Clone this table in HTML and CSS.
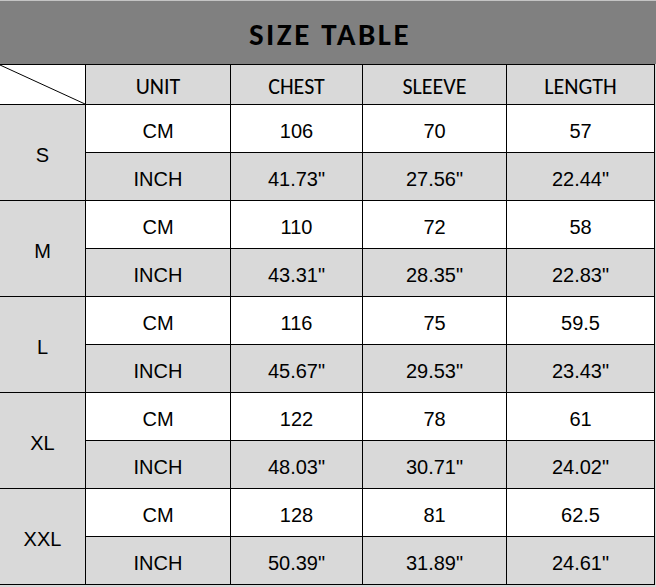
FILE: index.html
```html
<!DOCTYPE html>
<html>
<head>
<meta charset="utf-8">
<link rel="stylesheet" href="styles.css">
</head>
<body>
<div class="title">SIZE TABLE</div>
<div class="grid">
  <div class="cell corner"><svg width="85" height="39" viewBox="0 0 85 39"><line x1="0" y1="0" x2="85" y2="39" stroke="#000" stroke-width="1"/></svg></div>
  <div class="cell head">UNIT</div>
  <div class="cell head">CHEST</div>
  <div class="cell head">SLEEVE</div>
  <div class="cell head">LENGTH</div>

  <div class="cell size">S</div>
  <div class="cell cm">CM</div><div class="cell cm">106</div><div class="cell cm">70</div><div class="cell cm">57</div>
  <div class="cell in">INCH</div><div class="cell in">41.73"</div><div class="cell in">27.56"</div><div class="cell in">22.44"</div>

  <div class="cell size">M</div>
  <div class="cell cm">CM</div><div class="cell cm">110</div><div class="cell cm">72</div><div class="cell cm">58</div>
  <div class="cell in">INCH</div><div class="cell in">43.31"</div><div class="cell in">28.35"</div><div class="cell in">22.83"</div>

  <div class="cell size">L</div>
  <div class="cell cm">CM</div><div class="cell cm">116</div><div class="cell cm">75</div><div class="cell cm">59.5</div>
  <div class="cell in">INCH</div><div class="cell in">45.67"</div><div class="cell in">29.53"</div><div class="cell in">23.43"</div>

  <div class="cell size">XL</div>
  <div class="cell cm">CM</div><div class="cell cm">122</div><div class="cell cm">78</div><div class="cell cm">61</div>
  <div class="cell in">INCH</div><div class="cell in">48.03"</div><div class="cell in">30.71"</div><div class="cell in">24.02"</div>

  <div class="cell size">XXL</div>
  <div class="cell cm">CM</div><div class="cell cm">128</div><div class="cell cm">81</div><div class="cell cm">62.5</div>
  <div class="cell in">INCH</div><div class="cell in">50.39"</div><div class="cell in">31.89"</div><div class="cell in">24.61"</div>
</div>
</body>
</html>
```
FILE: styles.css
```css
html, body {
  margin: 0;
  padding: 0;
  background: #d9d9d9;
}
body {
  width: 656px;
  height: 587px;
  overflow: hidden;
}
.title {
  box-sizing: border-box;
  height: 64px;
  border-top: 1px solid #c4c4c4;
  background: #808080;
  color: #000;
  font-family: "Carlito", "Lato", sans-serif;
  font-weight: 700;
  font-size: 31px;
  letter-spacing: 2.5px;
  display: flex;
  align-items: center;
  justify-content: center;
  padding-left: 4px;
  padding-top: 3px;
}
.grid {
  display: grid;
  grid-template-columns: 85px 144px 131px 143px 147px;
  grid-template-rows: 39px repeat(10, 47px);
  gap: 1px;
  background: #000;
  border-top: 1px solid #000;
  border-right: 1px solid #000;
  border-bottom: 1px solid #000;
  width: 654px;
}
.cell {
  display: flex;
  align-items: center;
  justify-content: center;
  font-family: "Liberation Sans", Arial, sans-serif;
  font-size: 20px;
  color: #000;
  padding-top: 5px;
}
.corner {
  background: #fff;
  padding: 0;
  display: block;
}
.corner svg {
  display: block;
}
.head {
  background: #d9d9d9;
  font-family: "Carlito", "Lato", sans-serif;
  font-size: 22px;
  padding-top: 3px;
}
.size {
  grid-row: span 2;
  background: #d9d9d9;
}
.cm {
  background: #fff;
}
.in {
  background: #d9d9d9;
}
```
